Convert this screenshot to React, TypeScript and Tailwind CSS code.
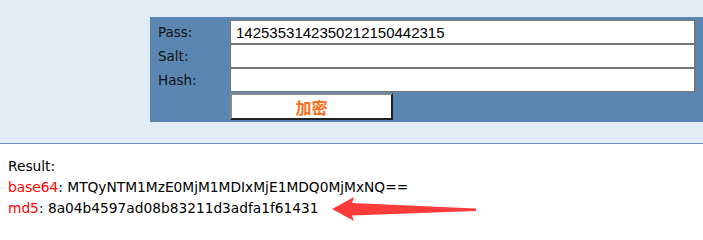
import React from "react";

const rows = [
  { label: "Pass:", value: "1425353142350212150442315" },
  { label: "Salt:", value: "" },
  { label: "Hash:", value: "" },
];

export default function App() {
  return (
    <div className="w-[703px] h-[221px] bg-white font-['DejaVu_Sans',sans-serif] text-[13.5px] text-black overflow-hidden">
      <div className="h-[144px] bg-[#e1ecf5] border-b border-[#6a8fbd] pt-[17px] pl-[150px]">
        <div className="h-[105px] bg-[#5b86b1] pt-[3px] pl-[8px] pr-[7px]">
          {rows.map((r) => (
            <div key={r.label} className="flex h-[24px] items-center">
              <div className="w-[72px] text-[#111]">{r.label}</div>
              <input
                readOnly
                value={r.value}
                className="h-[24px] flex-1 border border-[#767676] border-r-2 bg-white px-[5px] font-['Liberation_Sans',sans-serif] text-[15px] text-black outline-none"
              />
            </div>
          ))}
          <div className="flex">
            <div className="w-[72px]" />
            <button className="mt-[1px] h-[27px] w-[163px] border-2 border-t-[#8a8a8a] border-l-[#8a8a8a] border-r-[#222] border-b-[#222] bg-white font-['Noto_Sans_CJK_SC',sans-serif] text-[16px] font-bold leading-none text-[#ff6a13]">
              加密
            </button>
          </div>
        </div>
      </div>
      <div className="relative px-[8px] pt-[12px] text-[13.75px] leading-[21px]">
        <div>Result:</div>
        <div>
          <span className="text-[#f00]">base64</span>: MTQyNTM1MzE0MjM1MDIxMjE1MDQ0MjMxNQ==
        </div>
        <div>
          <span className="text-[#f00]">md5</span>: 8a04b4597ad08b83211d3adfa1f61431
        </div>
        <svg
          className="absolute left-0 top-0"
          width="703"
          height="77"
          viewBox="0 144 703 77"
        >
          <polygon
            points="332,209 354,197 352,203 476,208.5 476,211 352,215.5 354,221"
            fill="#ff3b3b"
          />
        </svg>
      </div>
    </div>
  );
}
